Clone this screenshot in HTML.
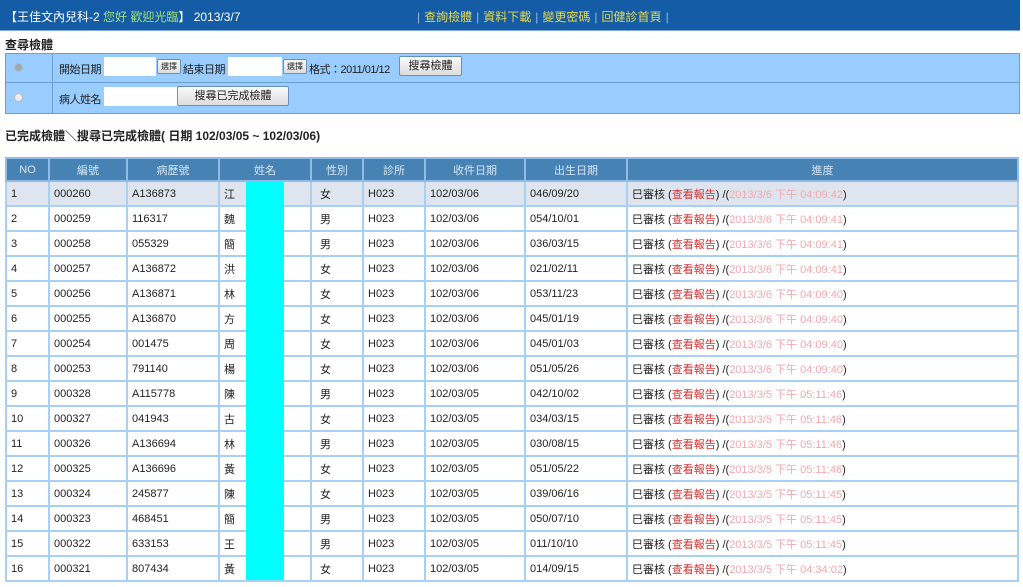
<!DOCTYPE html>
<html><head><meta charset="utf-8"><style>
body{margin:0;width:1023px;height:587px;overflow:hidden;background:#fff;font-family:"Liberation Sans","Noto Sans CJK TC",sans-serif;font-size:12px;color:#222;position:relative}
.hdr{position:absolute;left:0;top:0;width:1020px;height:30px;background:#145ca6;border-bottom:1px solid #7fa8d0}
.hdr .l{position:absolute;left:5px;top:8px;color:#fff;font-size:12px}
.hdr .g{color:#9fe07a}
.hdr .r{position:absolute;left:413px;top:8px;color:#e8d84a;font-size:12px;word-spacing:2px}
.hdr .r span{color:#9ab8d8;margin:0 4px}
.t1{position:absolute;left:5px;top:36px;font-weight:bold;font-size:12px}
.st{position:absolute;left:5px;top:53px;width:1013px;height:59px;background:#99ccff;border:1px solid #6a9fd0}
.st .sep{position:absolute;left:0;top:28px;width:1013px;height:1px;background:#6a9fd0}
.st .vl{position:absolute;left:46px;top:0;width:1px;height:59px;background:#6a9fd0}
.rad{position:absolute;left:8px;width:7px;height:7px;border-radius:50%;background:#eee;border:1px solid #bbb}
.in{position:absolute;height:19px;background:#fff}
.btn{position:absolute;height:18px;border:1px solid #6a8fb8;border-radius:2px;background:linear-gradient(#fafafa,#ddd);font-size:11px;text-align:center;line-height:18px}
.sb{font-size:8px;height:13px;line-height:13px}
.tx{position:absolute;font-size:11px;letter-spacing:-0.5px}
.t2{position:absolute;left:5px;top:127px;font-weight:bold;font-size:12px}
table{position:absolute;left:5px;top:157px;border-collapse:collapse;width:1014px;table-layout:fixed}
td,th{border:2px solid #a8d0f4;height:23px;padding:0 0 0 4px;font-size:11px;text-align:left;white-space:nowrap;overflow:hidden}
th{background:#4682b4;color:#d8e6f2;font-weight:normal;text-align:center;padding:0;height:21px;border-color:#8fbde8}
tr.a td{background:#dfe5ee}
td.c{text-align:left;padding-left:8px}
.red{color:#d93030}.pk{color:#f0a8b0}
.cy{position:absolute;left:246px;top:181px;width:38px;height:399px;background:#00ffff}
</style></head><body>
<div class="hdr"><div class="l">【王佳文內兒科-2 <span class="g">您好 歡迎光臨</span>】 2013/3/7</div>
<div class="r"><span>|</span>查詢檢體<span>|</span>資料下載<span>|</span>變更密碼<span>|</span>回健診首頁<span>|</span></div></div>
<div class="t1">查尋檢體</div>
<div class="st">
<div class="vl"></div><div class="sep"></div>
<div class="rad" style="top:9px;background:#9ab"></div>
<div class="rad" style="top:39px"></div>
<div class="tx" style="left:53px;top:7px">開始日期</div>
<div class="in" style="left:98px;top:3px;width:52px"></div>
<div class="btn sb" style="left:151px;top:5px;width:22px">選擇</div>
<div class="tx" style="left:177px;top:7px">結束日期</div>
<div class="in" style="left:222px;top:3px;width:54px"></div>
<div class="btn sb" style="left:277px;top:5px;width:22px">選擇</div>
<div class="tx" style="left:303px;top:7px">格式：2011/01/12</div>
<div class="btn" style="left:393px;top:2px;width:61px">搜尋檢體</div>
<div class="tx" style="left:53px;top:37px">病人姓名</div>
<div class="in" style="left:98px;top:33px;width:74px"></div>
<div class="btn" style="left:171px;top:32px;width:110px">搜尋已完成檢體</div>
</div>
<div class="t2">已完成檢體＼搜尋已完成檢體( 日期 102/03/05 ~ 102/03/06)</div>
<table>
<colgroup><col style="width:43px"><col style="width:78px"><col style="width:92px"><col style="width:92px"><col style="width:52px"><col style="width:62px"><col style="width:100px"><col style="width:102px"><col></colgroup>
<tr><th>NO</th><th>編號</th><th>病歷號</th><th>姓名</th><th>性別</th><th>診所</th><th>收件日期</th><th>出生日期</th><th>進度</th></tr>
<tr class="a"><td>1</td><td>000260</td><td>A136873</td><td>江</td><td class="c">女</td><td>H023</td><td>102/03/06</td><td>046/09/20</td><td>巳審核 (<span class="red">查看報告</span>) /(<span class="pk">2013/3/6 下午 04:09:42</span>)</td></tr>
<tr><td>2</td><td>000259</td><td>116317</td><td>魏</td><td class="c">男</td><td>H023</td><td>102/03/06</td><td>054/10/01</td><td>巳審核 (<span class="red">查看報告</span>) /(<span class="pk">2013/3/6 下午 04:09:41</span>)</td></tr>
<tr><td>3</td><td>000258</td><td>055329</td><td>簡</td><td class="c">男</td><td>H023</td><td>102/03/06</td><td>036/03/15</td><td>巳審核 (<span class="red">查看報告</span>) /(<span class="pk">2013/3/6 下午 04:09:41</span>)</td></tr>
<tr><td>4</td><td>000257</td><td>A136872</td><td>洪</td><td class="c">女</td><td>H023</td><td>102/03/06</td><td>021/02/11</td><td>巳審核 (<span class="red">查看報告</span>) /(<span class="pk">2013/3/6 下午 04:09:41</span>)</td></tr>
<tr><td>5</td><td>000256</td><td>A136871</td><td>林</td><td class="c">女</td><td>H023</td><td>102/03/06</td><td>053/11/23</td><td>巳審核 (<span class="red">查看報告</span>) /(<span class="pk">2013/3/6 下午 04:09:40</span>)</td></tr>
<tr><td>6</td><td>000255</td><td>A136870</td><td>方</td><td class="c">女</td><td>H023</td><td>102/03/06</td><td>045/01/19</td><td>巳審核 (<span class="red">查看報告</span>) /(<span class="pk">2013/3/6 下午 04:09:40</span>)</td></tr>
<tr><td>7</td><td>000254</td><td>001475</td><td>周</td><td class="c">女</td><td>H023</td><td>102/03/06</td><td>045/01/03</td><td>巳審核 (<span class="red">查看報告</span>) /(<span class="pk">2013/3/6 下午 04:09:40</span>)</td></tr>
<tr><td>8</td><td>000253</td><td>791140</td><td>楊</td><td class="c">女</td><td>H023</td><td>102/03/06</td><td>051/05/26</td><td>巳審核 (<span class="red">查看報告</span>) /(<span class="pk">2013/3/6 下午 04:09:40</span>)</td></tr>
<tr><td>9</td><td>000328</td><td>A115778</td><td>陳</td><td class="c">男</td><td>H023</td><td>102/03/05</td><td>042/10/02</td><td>巳審核 (<span class="red">查看報告</span>) /(<span class="pk">2013/3/5 下午 05:11:46</span>)</td></tr>
<tr><td>10</td><td>000327</td><td>041943</td><td>古</td><td class="c">女</td><td>H023</td><td>102/03/05</td><td>034/03/15</td><td>巳審核 (<span class="red">查看報告</span>) /(<span class="pk">2013/3/5 下午 05:11:46</span>)</td></tr>
<tr><td>11</td><td>000326</td><td>A136694</td><td>林</td><td class="c">男</td><td>H023</td><td>102/03/05</td><td>030/08/15</td><td>巳審核 (<span class="red">查看報告</span>) /(<span class="pk">2013/3/5 下午 05:11:46</span>)</td></tr>
<tr><td>12</td><td>000325</td><td>A136696</td><td>黃</td><td class="c">女</td><td>H023</td><td>102/03/05</td><td>051/05/22</td><td>巳審核 (<span class="red">查看報告</span>) /(<span class="pk">2013/3/5 下午 05:11:46</span>)</td></tr>
<tr><td>13</td><td>000324</td><td>245877</td><td>陳</td><td class="c">女</td><td>H023</td><td>102/03/05</td><td>039/06/16</td><td>巳審核 (<span class="red">查看報告</span>) /(<span class="pk">2013/3/5 下午 05:11:45</span>)</td></tr>
<tr><td>14</td><td>000323</td><td>468451</td><td>簡</td><td class="c">男</td><td>H023</td><td>102/03/05</td><td>050/07/10</td><td>巳審核 (<span class="red">查看報告</span>) /(<span class="pk">2013/3/5 下午 05:11:45</span>)</td></tr>
<tr><td>15</td><td>000322</td><td>633153</td><td>王</td><td class="c">男</td><td>H023</td><td>102/03/05</td><td>011/10/10</td><td>巳審核 (<span class="red">查看報告</span>) /(<span class="pk">2013/3/5 下午 05:11:45</span>)</td></tr>
<tr><td>16</td><td>000321</td><td>807434</td><td>黃</td><td class="c">女</td><td>H023</td><td>102/03/05</td><td>014/09/15</td><td>巳審核 (<span class="red">查看報告</span>) /(<span class="pk">2013/3/5 下午 04:34:02</span>)</td></tr>
</table>
<div class="cy"></div>
</body></html>
